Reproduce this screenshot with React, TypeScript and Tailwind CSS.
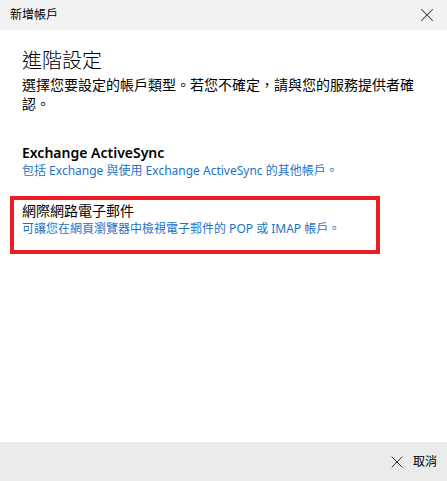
import { X } from "lucide-react"

const font = "font-['Segoe_UI','Noto_Sans','Noto_Sans_CJK_TC',sans-serif]"

export default function App() {
    return (
        <div className={`w-[447px] h-[481px] flex flex-col bg-white text-black ${font}`}>
            <div className="h-[30px] bg-[#f2f2f2] flex items-center justify-between pl-[10px] pr-[9px]">
                <span className="text-[12px] leading-none">新增帳戶</span>
                <X className="w-[22px] h-[22px] text-[#333]" strokeWidth={1.1} />
            </div>

            <div className="flex-1 pt-[17px]">
                <div className="px-[22px]">
                    <h1 className="text-[20px] leading-[28px] font-light">進階設定</h1>
                    <p className="text-[14px] leading-[19px]">
                        選擇您要設定的帳戶類型。若您不確定，請與您的服務提供者確認。
                    </p>
                </div>

                <div className="mt-[25px] flex flex-col">
                    <AccountOption
                        title="Exchange ActiveSync"
                        desc="包括 Exchange 與使用 Exchange ActiveSync 的其他帳戶。"
                        bold
                    />
                    <AccountOption
                        title="網際網路電子郵件"
                        desc="可讓您在網頁瀏覽器中檢視電子郵件的 POP 或 IMAP 帳戶。"
                        highlight
                    />
                </div>
            </div>

            <div className="h-[39px] bg-[#ebebeb] flex items-center justify-end gap-[6px] pr-[10px]">
                <X className="w-[20px] h-[20px] text-[#333]" strokeWidth={1.2} />
                <span className="text-[12px]">取消</span>
            </div>
        </div>
    )
}

function AccountOption({ title, desc, bold, highlight }: any) {
    return (
        <div
            className={`ml-[10px] w-[370px] h-[58px] border-[4px] pl-[8px] pt-[2px] ${highlight ? "border-[#ec1c24]" : "border-transparent"}`}
        >
            <div className={`text-[14px] leading-[18px] ${bold ? "font-semibold" : ""}`}>{title}</div>
            <div className="text-[12px] leading-[16px] mt-[1px] text-[#1a73c9]">{desc}</div>
        </div>
    )
}
